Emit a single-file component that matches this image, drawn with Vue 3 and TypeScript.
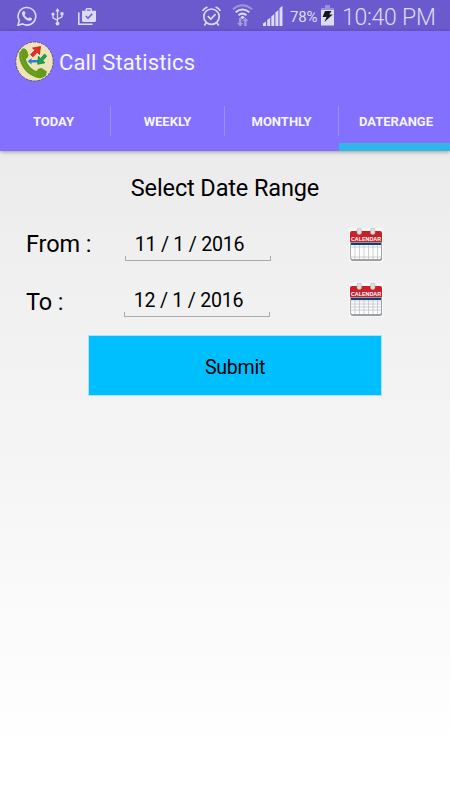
<script setup lang="ts">
import { ref } from 'vue'

interface DateField {
  id: string
  label: string
  value: string
  rows: number[]
}

const tabs: string[] = ['TODAY', 'WEEKLY', 'MONTHLY', 'DATERANGE']
const active = ref<string>('DATERANGE')

const fields: DateField[] = [
  { id: 'from', label: 'From :', value: '11 / 1 / 2016', rows: [18, 28] },
  { id: 'to', label: 'To :', value: '12 / 1 / 2016', rows: [17, 20, 23, 26] },
]
const columns: number[] = [6, 10.5, 15, 19.5, 24, 28.5]
</script>

<template>
  <div class="screen">
    <div class="status">
      <svg class="whatsapp" width="20" height="20" viewBox="0 0 20 20">
        <path d="M1 19.200 2.300 14.600A8.800 8.800 0 1 1 5.600 17.900Z" fill="none" stroke="currentColor" stroke-width="1.600" />
        <path d="M6 5.300c.8-.6 1.500-.4 1.700.2l.8 1.800c.1.600-.7 1.100-.9 1.600.8 1.500 2 2.600 3.600 3.300.5-.2 1-1.200 1.500-1l2 1c.5.4.1 1.700-.6 2.200-1.300.9-3.400.4-5.200-.8C7 11.900 5.200 10 5 7.800c0-1 .4-2 1-2.500Z" fill="currentColor" />
      </svg>
      <svg class="usb" width="13" height="18" viewBox="0 0 13 18">
        <path d="M6.500 2.500V15M6.500 12.500 2 9.800V6.500M6.500 11.200 11 8.800V5.500" fill="none" stroke="currentColor" stroke-width="1.300" />
        <path d="M6.500 0 8.700 3.500H4.300ZM9.500 4.200h3v3h-3Z" fill="currentColor" />
        <circle cx="2" cy="6" r="1.600" fill="currentColor" />
        <circle cx="6.500" cy="15.600" r="1.900" fill="currentColor" />
      </svg>
      <svg class="bag" width="19" height="18" viewBox="0 0 19 18">
        <path d="M.800 4.500V16.300H14.500" fill="none" stroke="currentColor" stroke-width="1.600" />
        <path fill-rule="evenodd" d="M4 2.800H7.500V1.500Q7.500 0 9 0h3.500Q14 0 14 1.500V2.800h4v9.700q0 1.500-1.500 1.500h-11Q4 14 4 12.500ZM9 2.800h3.500V1.500H9Z" fill="currentColor" />
        <path d="m7.800 8 2.200 2.200 4.300-4.500" fill="none" stroke="#6a5acd" stroke-width="1.500" />
      </svg>
      <span class="spacer"></span>
      <svg class="alarm" width="19" height="20" viewBox="0 0 19 20">
        <g fill="none" stroke="currentColor" stroke-width="1.700">
          <circle cx="9.500" cy="10.700" r="7.700" />
          <path d="M.700 5Q2 2.200 5.400 1M18.300 5Q17 2.200 13.600 1M4.200 16.800 2.300 19.400M14.800 16.800 16.700 19.400M5.800 10.200l3 2.900 4.800-5" />
        </g>
      </svg>
      <svg class="wifi" width="21" height="23" viewBox="0 0 21 23">
        <g fill="none" stroke="currentColor">
          <path d="M.900 5.300Q10.500-2.700 20.100 5.300" stroke-width="2" opacity=".45" />
          <path d="M3.700 8.200Q10.500 2.700 17.300 8.200" stroke-width="2" />
          <path d="M6.500 11.200Q10.500 8 14.500 11.200" stroke-width="2" />
        </g>
        <path d="m8.300 13.200 2.200-1.400 2.200 1.400-2.200 2Z" fill="currentColor" />
        <path d="M7 14h2.400v5h2L8.200 22.500 5 19h2ZM12.200 22h2.400v-5h2L13.400 13.500 10.200 17h2Z" fill="currentColor" opacity=".5" />
      </svg>
      <svg class="signal" width="20" height="21" viewBox="0 0 20 21">
        <path d="M0 21v-2.500l3-2V21ZM4.200 21v-6l3-2.300V21ZM8.300 21v-9.600l3-2.300V21ZM12.400 21V7.500l3-2.600V21ZM16.500 21V3.200l3-2.400V21Z" fill="currentColor" />
      </svg>
      <span class="percent">78%</span>
      <svg class="battery" width="13" height="21" viewBox="0 0 13 21">
        <path d="M4 0h5v3h4v5H0V3h4Z" fill="currentColor" opacity=".42" />
        <path d="M0 5h13v15.500H0Z" fill="currentColor" />
        <path d="M4 6h6.500L8.200 9.500h3.500L3.500 17 5.500 12H1.600Z" fill="#15151f" />
      </svg>
      <span class="clock">10:40 PM</span>
    </div>

    <header class="header">
      <div class="title-row">
        <svg class="logo" width="40" height="42" viewBox="0 0 40 42">
          <ellipse cx="20.500" cy="20.500" rx="18.700" ry="19.500" fill="#efe4b8" stroke="#544568" stroke-width=".8" stroke-dasharray="3 1" />
          <path d="M5.200 12 8.500 7.500Q11 6 13.500 10.500L14.500 14.500Q14 17 11.800 17.700C13 23 17 28 22.400 30Q25 26.200 28 27.200L33 30.500 31.800 34.800Q28 38.500 22 36.400C11.500 33.200 4 22 5.200 12Z" fill="#659b1d" />
          <path d="M7 12C7 21 13 30 23 33.500" fill="none" stroke="#7aa828" stroke-width="1" />
          <path d="m16.500 13.600 4.400-4.400-2.400-2.200 8-1.500-1 8-2.300-2.200-4.200 4.500Z" fill="#ed2d24" stroke="#9f2020" stroke-width=".7" />
          <path d="m13.600 20.200 4-3v1.800h6.300v2.600h-6.300v1.800Z" fill="#2585d4" />
          <path d="m30.500 13 2.200 2-4 4.800 2.200 2-7.200 1.500.7-8 2.300 2.200Z" fill="#16a557" stroke="#08783d" stroke-width=".7" />
        </svg>
        <h1 class="title">Call Statistics</h1>
      </div>
      <nav class="tabs">
        <button
          v-for="tab in tabs"
          :key="tab"
          class="tab"
          :class="{ active: tab === active }"
          @click="active = tab"
        >{{ tab }}</button>
      </nav>
    </header>

    <main class="content">
      <h2 class="heading">Select Date Range</h2>
      <div v-for="field in fields" :key="field.id" class="row" :class="field.id">
        <span class="label">{{ field.label }}</span>
        <span class="date"><span class="value">{{ field.value }}</span></span>
        <svg class="calendar" width="34" height="34" viewBox="0 0 34 34">
          <path d="M0 0h34v34H0Z" fill="#f8f8f8" />
          <rect x="1.500" y="5" width="31.500" height="27.800" rx="2" fill="#777b80" />
          <rect x="1.500" y="4" width="31" height="27.500" rx="2" fill="#fcfcfc" stroke="#999" stroke-width=".7" />
          <path d="M1 14V5q0-2 2-2h28q2 0 2 2v9Z" fill="#c9202a" />
          <path d="M2 14.500h30V17H2Z" fill="#173b6b" />
          <path v-for="x in columns" :key="'c' + x" :d="`M${x} 17V31`" class="grid" />
          <path v-for="y in field.rows" :key="'r' + y" :d="`M2 ${y + 1}H32`" class="grid" />
          <rect x="8" y="0" width="4.500" height="6.500" rx="2" fill="#ddd" stroke="#aaa" stroke-width=".5" />
          <rect x="21.500" y="0" width="4.500" height="6.500" rx="2" fill="#ddd" stroke="#aaa" stroke-width=".5" />
          <text x="17" y="12.500" text-anchor="middle" class="cal-text">CALENDAR</text>
        </svg>
      </div>
      <button class="submit">Submit</button>
    </main>
  </div>
</template>

<style>
body {
  margin: 0;
}
</style>

<style scoped>
.screen {
  width: 450px;
  height: 800px;
  overflow: hidden;
  display: flex;
  flex-direction: column;
  font-family: Roboto, 'Liberation Sans', sans-serif;
  color: #000;
}
.status {
  height: 31px;
  flex: none;
  box-sizing: border-box;
  padding: 0 14px 0 17px;
  display: flex;
  align-items: flex-start;
  background: #6a5acd;
  color: #dedaf6;
}
.status svg {
  flex: none;
}
.whatsapp { margin-top: 6px; }
.usb { margin: 8px 0 0 14px; }
.bag { margin: 8px 0 0 14px; }
.spacer { flex: 1; }
.alarm { margin: 6px 11px 0 0; }
.wifi { margin: 4px 10px 0 0; }
.signal { margin: 5px 7px 0 0; }
.percent {
  width: 31px;
  flex: none;
  font-size: 15px;
  line-height: 34px;
  letter-spacing: -0.2px;
}
.battery { margin-top: 5px; }
.clock {
  width: 94px;
  flex: none;
  margin-left: 8px;
  font-size: 23px;
  font-weight: 300;
  line-height: 35px;
  letter-spacing: -0.25px;
  white-space: nowrap;
}
.header {
  height: 120px;
  flex: none;
  position: relative;
  display: flex;
  flex-direction: column;
  background: #8470ff;
  box-shadow: 0 1px 4px rgba(0, 0, 0, 0.35);
}
.title-row {
  height: 61px;
  padding-left: 14px;
  display: flex;
  align-items: center;
}
.title {
  margin: 1px 0 0 5px;
  font-size: 22px;
  font-weight: 400;
  letter-spacing: 0.15px;
  color: #f7f5ff;
}
.tabs {
  height: 59px;
  margin-left: -3px;
  display: flex;
  overflow: hidden;
}
.tab {
  flex: none;
  width: 114px;
  height: 59px;
  padding: 8px 1px 0 0;
  border: 0;
  border-bottom: 8px solid transparent;
  background: linear-gradient(#9c8cff, #9c8cff) right 14px / 1px 30px no-repeat;
  font: 700 13px Roboto, sans-serif;
  color: #f7f5ff;
}
.tab.active {
  padding-right: 0;
  border-bottom-color: #33b5e5;
  background: none;
}
.content {
  flex: 1;
  padding-top: 22px;
  display: flex;
  flex-direction: column;
  background: linear-gradient(#ebebeb 0, #efefef 90px, #f3f3f3 250px, #fff 600px);
}
.heading {
  margin: 0;
  height: 30px;
  text-align: center;
  font-size: 23.5px;
  line-height: 31px;
  font-weight: 400;
  letter-spacing: -0.12px;
}
.row {
  height: 56px;
  padding-left: 26px;
  display: flex;
  align-items: flex-start;
}
.row.from { margin-top: 24px; }
.label {
  width: 99px;
  font-size: 23.5px;
  line-height: 35px;
  letter-spacing: -0.1px;
}
.row.to .label {
  width: 98px;
  padding-top: 2px;
}
.date {
  width: 146px;
  height: 34px;
  box-sizing: border-box;
  display: flex;
  justify-content: center;
  background:
    linear-gradient(#aaa, #aaa) left bottom / 100% 1px no-repeat,
    linear-gradient(#aaa, #aaa) left bottom / 1px 5px no-repeat,
    linear-gradient(#aaa, #aaa) right bottom / 1px 5px no-repeat;
}
.value {
  padding-right: 17px;
  font-size: 19.6px;
  line-height: 35px;
  letter-spacing: -0.25px;
  white-space: nowrap;
}
.calendar {
  margin: 1px 0 0 78px;
}
.row.to .calendar { margin: 0 0 0 79px; }
.grid {
  stroke: #b9bdc2;
  stroke-width: 0.7;
  fill: none;
}
.cal-text {
  font: 700 5.4px 'Liberation Sans', sans-serif;
  fill: #fff;
}
.submit {
  width: 294px;
  height: 61px;
  margin: -4px 0 0 88px;
  padding: 3px 0 0;
  border: 1px solid #b4def3;
  background: #00bfff;
  font: 400 19.6px Roboto, sans-serif;
  letter-spacing: -0.3px;
  color: #000;
}
</style>
